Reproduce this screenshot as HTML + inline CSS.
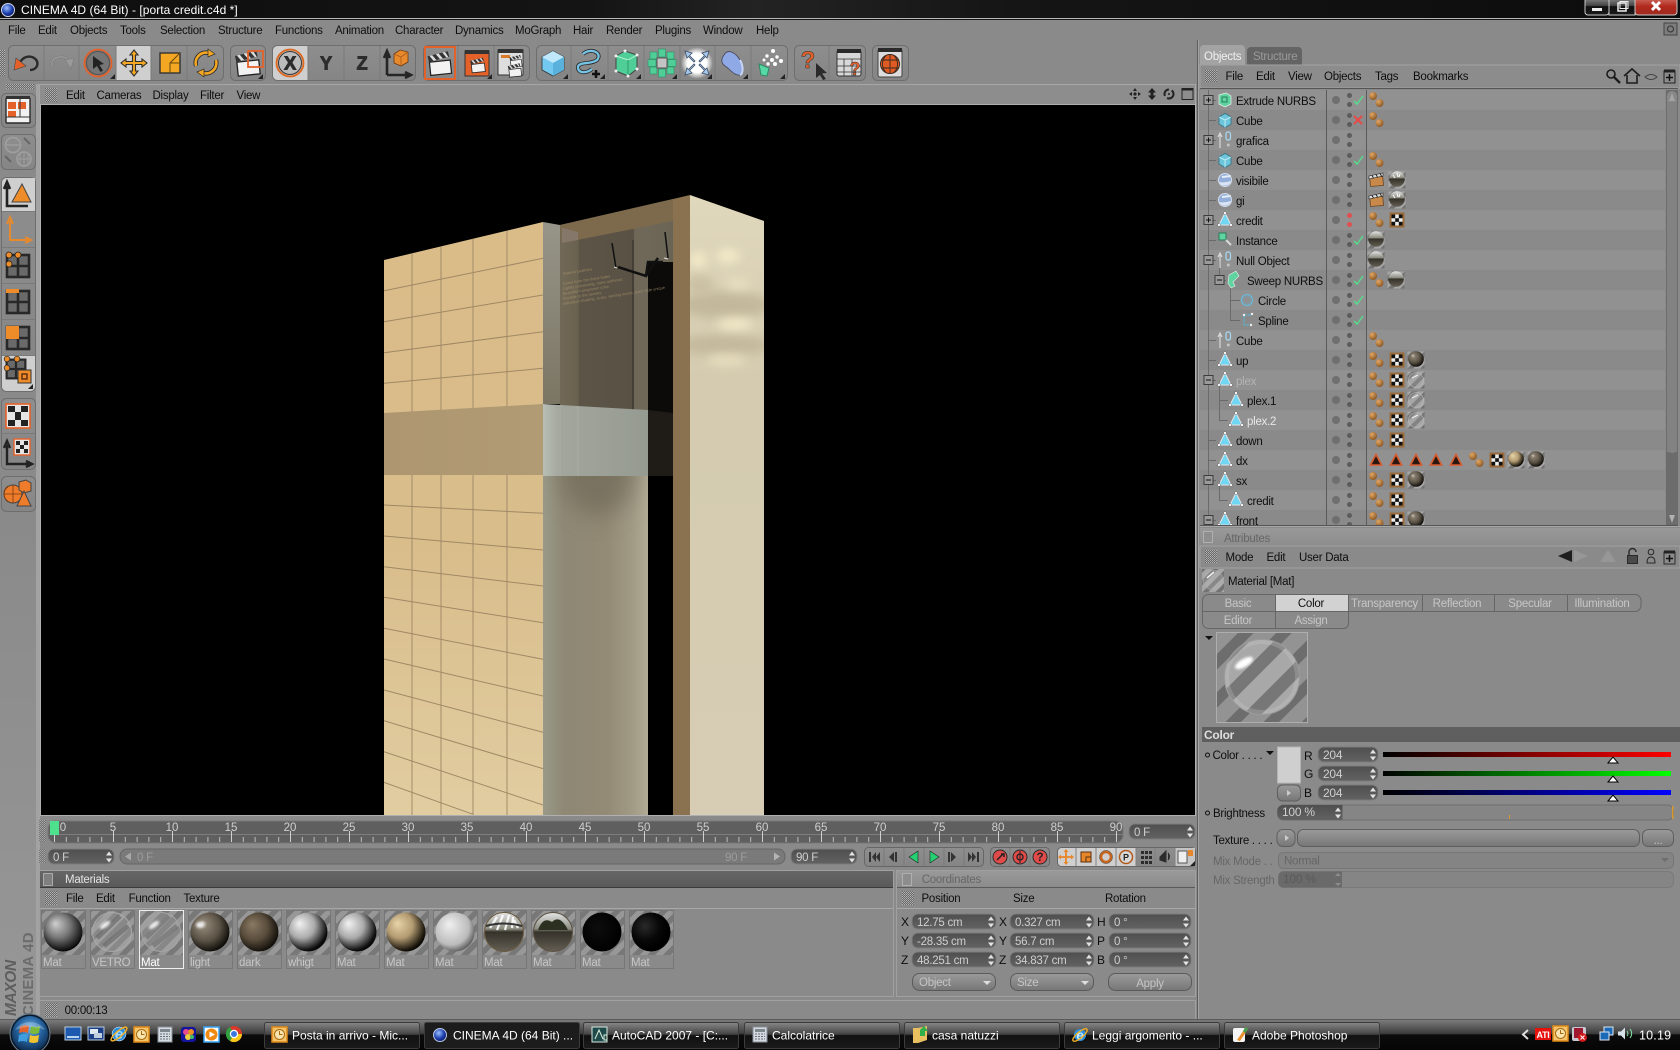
<!DOCTYPE html>
<html><head><meta charset="utf-8"><title>CINEMA 4D</title>
<style>
html,body{margin:0;padding:0;background:#8a8a8a;width:1680px;height:1050px;overflow:hidden}
svg{display:block}
text{font-family:"Liberation Sans",sans-serif;font-size:11.5px;letter-spacing:-.25px;fill:#0e0e0e}
.l{fill:#cfcfcf}.d{fill:#666}.g{fill:#c6c6c6}.w{fill:#fff;font-size:12px;letter-spacing:0}
.b{font-weight:bold}
</style></head><body>
<svg xmlns="http://www.w3.org/2000/svg" width="1680" height="1050" viewBox="0 0 1680 1050">
<defs>
<linearGradient id="tb" x1="0" y1="0" x2="0" y2="1"><stop offset="0" stop-color="#7b7b7b"/><stop offset=".45" stop-color="#3d3d3d"/><stop offset=".5" stop-color="#0b0b0b"/><stop offset="1" stop-color="#050505"/></linearGradient>
<linearGradient id="tbtn" x1="0" y1="0" x2="0" y2="1"><stop offset="0" stop-color="#888"/><stop offset=".45" stop-color="#444"/><stop offset=".5" stop-color="#111"/><stop offset="1" stop-color="#1a1a1a"/></linearGradient>
<linearGradient id="title" x1="0" y1="0" x2="1" y2="0"><stop offset="0" stop-color="#0e0e0e"/><stop offset=".35" stop-color="#141414"/><stop offset=".45" stop-color="#232323"/><stop offset=".6" stop-color="#151515"/><stop offset="1" stop-color="#0c0c0c"/></linearGradient>
<linearGradient id="grp" x1="0" y1="0" x2="0" y2="1"><stop offset="0" stop-color="#8e8e8e"/><stop offset="1" stop-color="#858585"/></linearGradient>
<linearGradient id="dk" x1="0" y1="0" x2="0" y2="1"><stop offset="0" stop-color="#4f4f4f"/><stop offset="1" stop-color="#626262"/></linearGradient>
<linearGradient id="btn" x1="0" y1="0" x2="0" y2="1"><stop offset="0" stop-color="#9a9a9a"/><stop offset="1" stop-color="#777"/></linearGradient>
<linearGradient id="hd" x1="0" y1="0" x2="0" y2="1"><stop offset="0" stop-color="#666"/><stop offset="1" stop-color="#5a5a5a"/></linearGradient>
<linearGradient id="hl" x1="0" y1="0" x2="0" y2="1"><stop offset="0" stop-color="#999"/><stop offset="1" stop-color="#8c8c8c"/></linearGradient>
<linearGradient id="sr" x1="0" y1="0" x2="1" y2="0"><stop offset="0" stop-color="#000"/><stop offset="1" stop-color="#f00"/></linearGradient>
<linearGradient id="sg" x1="0" y1="0" x2="1" y2="0"><stop offset="0" stop-color="#000"/><stop offset="1" stop-color="#0f0"/></linearGradient>
<linearGradient id="sb" x1="0" y1="0" x2="1" y2="0"><stop offset="0" stop-color="#000"/><stop offset="1" stop-color="#00f"/></linearGradient>
<linearGradient id="tile" x1="0" y1="0" x2="0" y2="1"><stop offset="0" stop-color="#d9bc88"/><stop offset=".55" stop-color="#d9bd8b"/><stop offset="1" stop-color="#e1cda1"/></linearGradient>
<linearGradient id="glassL" x1="0" y1="0" x2="1" y2="0"><stop offset="0" stop-color="#9a9988"/><stop offset=".2" stop-color="#8e8875"/><stop offset=".6" stop-color="#938a75"/><stop offset=".85" stop-color="#a19a85"/><stop offset="1" stop-color="#b1ab96"/></linearGradient>
<linearGradient id="right" x1="0" y1="0" x2="0" y2="1"><stop offset="0" stop-color="#e0d8bd"/><stop offset=".3" stop-color="#d4cbb0"/><stop offset="1" stop-color="#d6cdb4"/></linearGradient>
<linearGradient id="band" x1="0" y1="0" x2="1" y2="0"><stop offset="0" stop-color="#ad9670"/><stop offset="1" stop-color="#b19b74"/></linearGradient>
<linearGradient id="bandg" x1="0" y1="0" x2="1" y2="0"><stop offset="0" stop-color="#b9bfb5"/><stop offset=".16" stop-color="#a2a69c"/><stop offset="1" stop-color="#969b92"/></linearGradient>
<linearGradient id="upl" x1="0" y1="0" x2="0" y2="1"><stop offset="0" stop-color="#979589"/><stop offset="1" stop-color="#7b7563"/></linearGradient>
<linearGradient id="upg" x1="0" y1="0" x2="1" y2="0"><stop offset="0" stop-color="#716956"/><stop offset=".16" stop-color="#6a624f"/><stop offset=".17" stop-color="#5c5446"/><stop offset=".65" stop-color="#595144"/><stop offset=".66" stop-color="#6f6859"/><stop offset=".78" stop-color="#6f6859"/><stop offset="1" stop-color="#6a6455"/></linearGradient>
<linearGradient id="env" x1="0" y1="0" x2="0" y2="1"><stop offset="0" stop-color="#e4e6e6"/><stop offset=".42" stop-color="#8c8c80"/><stop offset=".5" stop-color="#35322a"/><stop offset="1" stop-color="#655f54"/></linearGradient>
<linearGradient id="leftfade" x1="0" y1="0" x2="0" y2="1"><stop offset="0" stop-color="#8a8a8a"/><stop offset="1" stop-color="#979797"/></linearGradient>
<radialGradient id="sGray" cx=".45" cy=".4" r=".62" fx=".3" fy=".28"><stop offset="0" stop-color="#cfcfcf"/><stop offset=".5" stop-color="#777"/><stop offset="1" stop-color="#000"/></radialGradient>
<radialGradient id="sLight" cx=".42" cy=".4" r=".62" fx=".3" fy=".28"><stop offset="0" stop-color="#d8d0c4"/><stop offset=".18" stop-color="#8a8071"/><stop offset=".6" stop-color="#5b5346"/><stop offset="1" stop-color="#0c0a06"/></radialGradient>
<radialGradient id="sDark" cx=".42" cy=".42" r=".62" fx=".32" fy=".3"><stop offset="0" stop-color="#8a7a64"/><stop offset=".55" stop-color="#5a4d3c"/><stop offset="1" stop-color="#0c0a06"/></radialGradient>
<radialGradient id="sWhite" cx=".4" cy=".38" r=".66" fx=".28" fy=".28"><stop offset="0" stop-color="#f2f2f2"/><stop offset=".5" stop-color="#aaa"/><stop offset=".9" stop-color="#111"/><stop offset="1" stop-color="#000"/></radialGradient>
<radialGradient id="sTan" cx=".4" cy=".38" r=".66" fx=".28" fy=".28"><stop offset="0" stop-color="#e8d3a8"/><stop offset=".5" stop-color="#b39b72"/><stop offset=".9" stop-color="#1c170d"/><stop offset="1" stop-color="#000"/></radialGradient>
<radialGradient id="sPale" cx=".42" cy=".4" r=".66" fx=".35" fy=".3"><stop offset="0" stop-color="#f0f0f0"/><stop offset=".7" stop-color="#bbb"/><stop offset="1" stop-color="#4a4a4a"/></radialGradient>
<radialGradient id="sBlack" cx=".4" cy=".4" r=".6"><stop offset="0" stop-color="#0d0d0d"/><stop offset="1" stop-color="#000"/></radialGradient>
<radialGradient id="sBlack2" cx=".35" cy=".35" r=".6"><stop offset="0" stop-color="#2a2a2a"/><stop offset=".6" stop-color="#080808"/><stop offset="1" stop-color="#000"/></radialGradient>
<radialGradient id="ballG" cx=".35" cy=".3" r=".7"><stop offset="0" stop-color="#e0a868"/><stop offset="1" stop-color="#8e5a26"/></radialGradient>
<radialGradient id="orb" cx=".5" cy=".35" r=".7"><stop offset="0" stop-color="#6fb2e8"/><stop offset=".5" stop-color="#24609c"/><stop offset="1" stop-color="#0a2240"/></radialGradient>
<radialGradient id="c4d" cx=".4" cy=".35" r=".7"><stop offset="0" stop-color="#9cc0ff"/><stop offset=".6" stop-color="#1c3fae"/><stop offset="1" stop-color="#071656"/></radialGradient>
<radialGradient id="glow" cx=".5" cy=".5" r=".5"><stop offset="0" stop-color="#fff"/><stop offset=".6" stop-color="#fff"/><stop offset="1" stop-color="#fff" stop-opacity="0"/></radialGradient>
<pattern id="grip" width="2" height="2" patternUnits="userSpaceOnUse"><rect width="2" height="2" fill="#686868"/><rect width="1" height="1" fill="#b4b4b4"/><rect x="1" y="1" width="1" height="1" fill="#a0a0a0"/></pattern>
<pattern id="st" width="11" height="11" patternUnits="userSpaceOnUse" patternTransform="rotate(45)"><rect width="11" height="11" fill="#989898"/><rect width="5.5" height="11" fill="#787878"/></pattern>
<pattern id="stP" width="27" height="27" patternUnits="userSpaceOnUse" patternTransform="rotate(45)"><rect width="27" height="27" fill="#939393"/><rect width="11" height="27" fill="#6d6d6d"/></pattern>
<pattern id="stG" width="30" height="30" patternUnits="userSpaceOnUse" patternTransform="rotate(45 10 10)"><rect width="30" height="30" fill="#a8a8a8"/><rect width="13" height="30" fill="#777"/></pattern>
<pattern id="stM" width="9" height="9" patternUnits="userSpaceOnUse" patternTransform="rotate(45)"><rect width="9" height="9" fill="#a6a6a6"/><rect width="4" height="9" fill="#737373"/></pattern>
<pattern id="mn" x="54" y="0" width="11.8" height="50" patternUnits="userSpaceOnUse"><rect width="1" height="50" fill="#bdbdbd"/></pattern>
<pattern id="mj" x="54" y="0" width="59" height="50" patternUnits="userSpaceOnUse"><rect width="1" height="50" fill="#d0d0d0"/></pattern>
<filter id="bl" x="-100%" y="-100%" width="300%" height="300%"><feGaussianBlur stdDeviation="5"/></filter>
<filter id="bl3" x="-100%" y="-100%" width="300%" height="300%"><feGaussianBlur stdDeviation="12"/></filter>
<filter id="bl2" x="-100%" y="-100%" width="300%" height="300%"><feGaussianBlur stdDeviation="1.2"/></filter>
<clipPath id="vp"><rect x="41" y="105" width="1153" height="710"/></clipPath>
<clipPath id="rf"><path d="M690 195L764 221V815H690Z"/></clipPath>
<clipPath id="lf"><path d="M384 260L543 222V815H384Z"/></clipPath>
<clipPath id="gl"><rect x="543" y="476" width="105" height="339"/></clipPath>
<clipPath id="objs"><rect x="1200" y="90" width="465" height="435"/></clipPath>
<clipPath id="pc"><circle cx="1262" cy="677" r="37"/></clipPath>

<g id="spin"><path d="M0 4.5L3 .5L6 4.5ZM0 7.5L3 11.5L6 7.5Z" fill="#e4e4e4"/></g>
<path id="tick" d="M0 6L5 0L10 6Z" fill="#fff" stroke="#000" stroke-width="1"/>

<g id="dots"><circle cx="1336" cy="0" r="4" fill="#6f6f6f"/><circle cx="1349.500" cy="-4.500" r="2.500" fill="#5c5c5c"/><circle cx="1349.500" cy="4.500" r="2.500" fill="#5c5c5c"/></g>
<g id="dotsR"><circle cx="1336" cy="0" r="4" fill="#6f6f6f"/><circle cx="1349.500" cy="-4.500" r="2.500" fill="#e05050"/><circle cx="1349.500" cy="4.500" r="2.500" fill="#e05050"/></g>
<path id="ok" d="M1354 1L1357 4L1363 -4" fill="none" stroke="#54e08c" stroke-width="1.400"/>
<path id="no" d="M1354 -4L1362 4M1362 -4L1354 4" fill="none" stroke="#e84848" stroke-width="2"/>
<g id="plus"><rect x="-4.500" y="-4.500" width="9" height="9" fill="#9a9a9a" stroke="#3c3c3c"/><path d="M-2.500 0H2.500M0 -2.500V2.500" stroke="#111"/></g>
<g id="minus"><rect x="-4.500" y="-4.500" width="9" height="9" fill="#9a9a9a" stroke="#3c3c3c"/><path d="M-2.500 0H2.500" stroke="#111"/></g>
<g id="poly"><path d="M0 -7L6 5H-6Z" fill="#6fd6f4" stroke="#e4e4e4"/><circle cy="-7" r="1.400" fill="#fff" stroke="#555" stroke-width=".4"/><circle cx="-6" cy="5" r="1.400" fill="#fff" stroke="#555" stroke-width=".4"/><circle cx="6" cy="5" r="1.400" fill="#fff" stroke="#555" stroke-width=".4"/></g>
<g id="nul"><path d="M-6 8V-5M-8 -3L-6 -7L-4 -3" fill="none" stroke="#d8d8d8" stroke-width="1.200"/><rect x="0" y="-8" width="4.500" height="8" rx="2" fill="none" stroke="#a8d8f0" stroke-width="1.200"/><circle cx="2.300" cy="5" r="1.500" fill="#c4c4c4"/></g>
<g id="cub"><path d="M-6 -3L0 -6.500L6 -3V4L0 7.500L-6 4Z" fill="#6ec6dc" stroke="#3c7a8c"/><path d="M-6 -3L0 0L6 -3M0 0V7.500" fill="none" stroke="#d0f2fa" stroke-width=".8"/></g>
<g id="sph"><circle r="6.500" fill="#93aed8"/><path d="M-6 2A6.500 6.500 0 0 0 6 1Q0 3 -6 2Z" fill="#dbe4f2"/><path d="M-3 -3L6 -4" stroke="#e6eefa" stroke-width="2"/><circle r="6.500" fill="none" stroke="#d4dcea"/></g>
<g id="balls"><circle cx="1373" cy="-4" r="4" fill="url(#ballG)"/><circle cx="1379.500" cy="3" r="4" fill="url(#ballG)"/></g>
<g id="chk"><rect x="1389.500" y="-7.500" width="15" height="15" fill="#9a6c3c"/><rect x="1391.500" y="-5.500" width="11" height="11" fill="#eee"/><path d="M1391.500 -5.500h3.700v3.700h-3.700zM1398.800 -5.500h3.700v3.700h-3.700zM1395.200 -1.800h3.700v3.700h-3.700zM1391.500 1.800h3.700v3.700h-3.700zM1398.800 1.800h3.700v3.700h-3.700z" fill="#111"/></g>
<g id="clap"><rect x="1370" y="-3" width="13" height="9" fill="#c8894a" stroke="#6a4520" stroke-width=".8" transform="rotate(-5 1376 0)"/><path d="M1369 -4L1383 -7V-4L1369 -1Z" fill="#ddd" stroke="#222" stroke-width=".6"/><path d="M1372 -4.500l1.500 2.500M1376 -5.500l1.500 2.500M1380 -6.500l1.500 2.500" stroke="#222"/></g>
<g id="tagS"><rect x="-8.500" y="-8.500" width="17" height="17" fill="url(#stM)"/></g>
<g id="tagChrome"><use href="#tagS"/><circle r="7.800" cy="-1" fill="url(#env)"/></g>
<g id="tagGi"><use href="#tagS"/><circle r="7.800" cy="-1" fill="url(#env)"/><path d="M-4 -5l2 3M0 -7l1 4M3 -6l-1 3" stroke="#fff" stroke-width="1"/></g>
<g id="tagLight"><use href="#tagS"/><circle r="7.800" cy="-1" fill="url(#sLight)"/></g>
<g id="tagGlass"><rect x="-8.500" y="-8.500" width="17" height="17" fill="url(#stM)"/><circle r="7.500" fill="#a8a8a8" fill-opacity=".3" stroke="#bcbcbc" stroke-width=".6"/><path d="M-4 -2L2 -5" stroke="#eee"/></g>
<g id="tagTan"><use href="#tagS"/><circle r="7.800" cy="-1" fill="url(#sTan)"/></g>
<g id="tri"><path d="M0 -5.500L5.500 5H-5.500Z" fill="#2a1810" stroke="#d8582c" stroke-width="1.600"/></g>

<g id="clapper"><g transform="rotate(-6)"><rect x="-11" y="-2" width="22" height="14" fill="#f2f2f2" stroke="#222" stroke-width="1.300"/></g><g transform="rotate(-14)"><rect x="-11" y="-10" width="22" height="6" fill="#333"/><path d="M-9 -10l3 6h3l-3 -6zM-2 -10l3 6h3l-3 -6zM5 -10l3 6h2l-2 -6z" fill="#ddd"/></g></g>
<path id="corner" d="M0 5L5 0V5Z" fill="#222"/>
<path id="moveA" d="M0 -13L4 -8H1.500V-1.500H8V-4L13 0L8 4V1.500H1.500V8H4L0 13L-4 8H-1.500V1.500H-8V4L-13 0L-8 -4V-1.500H-1.500V-8H-4Z" fill="#f3a722" stroke="#2e2e2e" stroke-width="1.100"/>
<g id="grid"><rect x="-11" y="-11" width="22" height="22" fill="#6a6a6a" stroke="#282828" stroke-width="2.600"/><path d="M0 -11V11M-11 0H11" stroke="#282828" stroke-width="2.600"/></g>
</defs>

<rect width="1680" height="1050" fill="#8a8a8a"/>
<rect x="0" y="520" width="36" height="500" fill="url(#leftfade)"/>

<!-- TITLE BAR -->
<rect width="1680" height="18" fill="url(#title)"/>
<rect y="18" width="1680" height="1" fill="#b8b8b8"/><rect y="19" width="1680" height="1" fill="#141414"/>
<circle cx="8" cy="10" r="6.500" fill="url(#c4d)" stroke="#cfd6e6"/>
<text x="21" y="14" class="w" style="font-size:12px;letter-spacing:.05px">CINEMA 4D (64 Bit) - [porta credit.c4d *]</text>
<g>
<rect x="1585" y="-2" width="24" height="17" rx="3" fill="url(#tbtn)" stroke="#c8c8c8"/>
<rect x="1609" y="-2" width="26" height="17" fill="url(#tbtn)" stroke="#c8c8c8"/>
<linearGradient id="cl" x1="0" y1="0" x2="0" y2="1"><stop offset="0" stop-color="#cf6a5e"/><stop offset=".5" stop-color="#b0291c"/><stop offset="1" stop-color="#a02a20"/></linearGradient>
<rect x="1635" y="-2" width="42" height="17" rx="3" fill="url(#cl)" stroke="#c8c8c8"/>
<rect x="1592" y="8" width="10" height="3" fill="#eee"/>
<rect x="1618" y="3" width="8" height="8" fill="none" stroke="#eee" stroke-width="1.500"/><rect x="1620" y="1.500" width="8" height="7" fill="none" stroke="#eee"/>
<path d="M1652 2L1660 10M1660 2L1652 10" stroke="#fff" stroke-width="3"/>
</g>

<!-- MENU -->
<g>
<text x="8" y="34">File</text><text x="38" y="34">Edit</text><text x="70" y="34">Objects</text><text x="120" y="34">Tools</text><text x="160" y="34">Selection</text><text x="218" y="34">Structure</text><text x="275" y="34">Functions</text><text x="335" y="34">Animation</text><text x="395" y="34">Character</text><text x="455" y="34">Dynamics</text><text x="515" y="34">MoGraph</text><text x="573" y="34">Hair</text><text x="606" y="34">Render</text><text x="655" y="34">Plugins</text><text x="703" y="34">Window</text><text x="756" y="34">Help</text>
</g>
<g transform="translate(1664,23)"><rect width="13" height="12" fill="#7c7c7c" stroke="#444"/><circle cx="6.500" cy="6" r="3" fill="none" stroke="#333"/></g>

<!-- TOOLBAR -->
<rect x="0" y="50" width="5" height="26" fill="url(#grip)"/>
<g fill="url(#grp)" stroke="#6e6e6e">
<rect x="8.500" y="45.500" width="215" height="35" rx="5"/>
<rect x="230.500" y="45.500" width="35" height="35" rx="5"/>
<rect x="272.500" y="45.500" width="143" height="35" rx="5"/>
<rect x="423.500" y="45.500" width="106" height="35" rx="5"/>
<rect x="536.500" y="45.500" width="251" height="35" rx="5"/>
<rect x="794.500" y="45.500" width="71" height="35" rx="5"/>
<rect x="872.500" y="45.500" width="36" height="35" rx="5"/>
</g>
<rect x="116" y="46" width="35" height="34" fill="#cfcfcf"/>
<path d="M273 50a5 5 0 0 1 4 -4h31v34h-31a5 5 0 0 1 -4 -4z" fill="#cfcfcf"/>
<path d="M44 46V80M79 46V80M116 46V80M151 46V80M187 46V80M308 46V80M344 46V80M380 46V80M458 46V80M494 46V80M571 46V80M608 46V80M644 46V80M680 46V80M715 46V80M751 46V80M829 46V80" stroke="#7a7a7a"/>
<!-- undo -->
<g transform="translate(27,63)"><path d="M-7 -1Q-2 -8 5 -6Q12 -3 10 3Q8 7 3 7" fill="none" stroke="#2a2a2a" stroke-width="2.400"/><path d="M-13 7L-11 -5L-1 3Z" fill="#e5612a" stroke="#444" stroke-width=".6"/></g>
<!-- redo -->
<g transform="translate(61,63)"><path d="M-9 3Q-10 -5 -2 -6Q6 -7 8 -1" fill="none" stroke="#7c7c7c" stroke-width="2.600"/><path d="M-9 3Q-10 -5 -2 -6Q6 -7 8 -1" fill="none" stroke="#9d9d9d" stroke-width="1.200"/><path d="M13 -5L4 -3L10 6Z" fill="#9a9a9a" stroke="#7a7a7a" stroke-width=".6"/></g>
<!-- select -->
<g transform="translate(98,63)"><circle r="13.500" fill="#767676" stroke="#e5612a" stroke-width="1.800"/><circle r="11.500" fill="none" stroke="#555"/><path d="M-5 -7L6 1L1.500 2L5 7.500L2.500 9L-1 3L-5 6Z" fill="#222"/></g>
<use href="#corner" x="110" y="74"/>
<!-- move -->
<use href="#moveA" x="134" y="63"/>
<!-- scale -->
<g transform="translate(170,63)"><rect x="-10" y="-10" width="20" height="20" fill="#f3a722" stroke="#333" stroke-width="1.400"/><path d="M0 10V0H10M0 0L10 -10" fill="none" stroke="#6a4a10" stroke-width="1"/></g>
<!-- rotate -->
<g transform="translate(206,63)" fill="none"><path d="M-10 3A10.500 10.500 0 0 1 3 -10" stroke="#2e2e2e" stroke-width="4.400"/><path d="M10 -3A10.500 10.500 0 0 1 -3 10" stroke="#2e2e2e" stroke-width="4.400"/><path d="M-10 3A10.500 10.500 0 0 1 3 -10" stroke="#f3a722" stroke-width="2.600"/><path d="M10 -3A10.500 10.500 0 0 1 -3 10" stroke="#f3a722" stroke-width="2.600"/><path d="M2 -14L9 -9L2 -6Z" fill="#f3a722" stroke="#2e2e2e" stroke-width=".7"/><path d="M-2 14L-9 9L-2 6Z" fill="#f3a722" stroke="#2e2e2e" stroke-width=".7"/></g>
<!-- render region -->
<g transform="translate(248,63)"><use href="#clapper"/><rect x="0" y="-12" width="15" height="16" fill="none" stroke="#e5612a" stroke-width="1.800"/></g>
<use href="#corner" x="258" y="74"/>
<!-- X Y Z -->
<g transform="translate(290,63)"><circle r="13.500" fill="#bcbcbc" stroke="#e0661c" stroke-width="1.800"/><circle r="11.500" fill="none" stroke="#333"/></g>
<text x="290" y="69.500" text-anchor="middle" class="b" style="font-size:18px;fill:#2c2c2c;stroke:#2c2c2c;stroke-width:1">X</text>
<text x="326" y="69.500" text-anchor="middle" class="b" style="font-size:18px;fill:#2c2c2c;stroke:#2c2c2c;stroke-width:.9">Y</text>
<text x="362" y="69.500" text-anchor="middle" class="b" style="font-size:18px;fill:#2c2c2c;stroke:#2c2c2c;stroke-width:.9">Z</text>
<g transform="translate(398,63)"><path d="M-11 12V-9M-14 -5L-11 -12L-8 -5M-11 12H11M7 9L13 12L7 15" fill="none" stroke="#252525" stroke-width="2.600"/><path d="M-4 -9L2 -13L10 -11L10 -1L3 3L-4 0Z" fill="#e88a2c" stroke="#6c3a12" stroke-width=".8"/><path d="M-4 -9L3 -6L10 -11M3 -6V3" fill="none" stroke="#a85a1c" stroke-width=".8"/></g>
<!-- render -->
<g transform="translate(440,63)"><use href="#clapper" transform="scale(.95)"/><rect x="-15" y="-16" width="30" height="32" fill="none" stroke="#e5612a" stroke-width="2"/></g>
<g transform="translate(477,63)"><rect x="-12" y="-12" width="24" height="25" fill="#e5612a" stroke="#333"/><rect x="-12" y="-13" width="24" height="4" fill="#333"/><use href="#clapper" transform="translate(1,2) scale(.6)"/></g>
<use href="#corner" x="487" y="74"/>
<g transform="translate(511,63)"><rect x="-13" y="-13" width="25" height="25" fill="#ddd" stroke="#333"/><rect x="-13" y="-14" width="25" height="4" fill="#333"/><rect x="-10" y="-8" width="9" height="3" fill="#d87a2a"/><use href="#clapper" transform="translate(5,-2) scale(.5)"/><use href="#clapper" transform="translate(4,7) scale(.55)"/></g>
<!-- cube -->
<g transform="translate(553,63)"><path d="M-11 -6L0 -12L11 -6V7L0 13L-11 7Z" fill="#72c8ee" stroke="#333" stroke-width=".8"/><path d="M-11 -6L0 0L11 -6L0 -12Z" fill="#bfe8fa"/><path d="M0 0V13L11 7V-6Z" fill="#5ab2dc"/></g><use href="#corner" x="563" y="74"/>
<!-- spline -->
<g transform="translate(589,61)" fill="none"><path d="M-6 -7C2 -14 14 -8 8 -1C2 4 -12 0 -11 7C-10 13 -2 12 3 8" stroke="#2c2c2c" stroke-width="4"/><path d="M-6 -7C2 -14 14 -8 8 -1C2 4 -12 0 -11 7C-10 13 -2 12 3 8" stroke="#76c4e6" stroke-width="2.300"/><path d="M7 9V17M3 13H11" stroke="#111" stroke-width="2.500"/></g><use href="#corner" x="600" y="74"/>
<!-- nurbs -->
<g transform="translate(626,63)"><path d="M-10 -7L-1 -12L11 -8V6L2 13L-10 8Z" fill="#4fce98" stroke="#444"/><path d="M-10 -7L2 -3L11 -8" fill="none" stroke="#b4f4d4"/><path d="M2 -3V13" stroke="#2f9a6c"/><g fill="#eee"><circle cx="-10" cy="-7" r="1.500"/><circle cx="-1" cy="-12" r="1.500"/><circle cx="11" cy="-8" r="1.500"/><circle cx="11" cy="6" r="1.500"/><circle cx="2" cy="13" r="1.500"/><circle cx="-10" cy="8" r="1.500"/></g></g><use href="#corner" x="636" y="74"/>
<!-- array -->
<g transform="translate(662,63)"><g fill="#4fce98" stroke="#2f8a64" stroke-width=".6"><rect x="-3.500" y="-14" width="7" height="8"/><rect x="-3.500" y="6" width="7" height="8"/><rect x="-14" y="-3.500" width="8" height="7"/><rect x="6" y="-3.500" width="8" height="7"/><rect x="5" y="-11" width="7" height="7"/><rect x="-12" y="-11" width="7" height="7"/><rect x="5" y="4" width="7" height="7"/><rect x="-12" y="4" width="7" height="7"/></g><rect x="-5" y="-5" width="10" height="10" fill="#c4c4c4" stroke="#555"/></g><use href="#corner" x="672" y="74"/>
<!-- deformer -->
<g transform="translate(697,63)"><circle r="16" fill="url(#glow)"/><g stroke="#3d4e66" stroke-width=".8" fill="#a6c8ec"><path d="M-12 -12L-5 -10L-7.500 -7.500L-2 -2L-3 -1L-8.500 -6.500L-10 -5Z"/><path d="M12 -12L5 -10L7.500 -7.500L2 -2L3 -1L8.500 -6.500L10 -5Z"/><path d="M-12 12L-5 10L-7.500 7.500L-2 2L-3 1L-8.500 6.500L-10 5Z"/><path d="M12 12L5 10L7.500 7.500L2 2L3 1L8.500 6.500L10 5Z"/></g></g><use href="#corner" x="707" y="74"/>
<!-- shape -->
<g transform="translate(733,63)"><path d="M-9 -8C-5 -15 3 -10 7 -3C11 4 11 11 7 12C1 13 -3 6 -8 3C-12 0 -12 -4 -9 -8Z" fill="#8fa8e6" stroke="#445" stroke-width=".8"/><path d="M7 12C10 11 11 4 7 -3" fill="none" stroke="#c7d4f4" stroke-width="2"/></g><use href="#corner" x="743" y="74"/>
<!-- particles -->
<g transform="translate(770,63)"><path d="M-11 1L-1 5L-3 13L-9 12Z" fill="#58d8a4" stroke="#2d8a64"/><g fill="#fff"><circle cx="3" cy="-12" r="2"/><circle cx="-3" cy="-7" r="1.700"/><circle cx="7" cy="-6" r="1.700"/><circle cx="11" cy="-2" r="2"/><circle cx="2" cy="-3" r="2"/><circle cx="-2" cy="1" r="1.700"/><circle cx="5" cy="1" r="2"/><circle cx="-6" cy="-3" r="1.500"/></g></g><use href="#corner" x="780" y="74"/>
<!-- help -->
<g transform="translate(813,62)"><text x="-5" y="6" text-anchor="middle" class="b" style="font-size:24px;fill:#e5612a;stroke:#2a2a2a;stroke-width:.5;letter-spacing:0">?</text><path d="M4 1L15 11L10 11.500L14 17L11 18L8 13L4 16Z" fill="#2a2a2a" transform="translate(-1,0)"/></g>
<g transform="translate(849,63)"><rect x="-12" y="-13" width="24" height="26" rx="2" fill="#d8d8d8" stroke="#333"/><rect x="-12" y="-14" width="24" height="4" fill="#2a2a2a"/><path d="M-12 -4H12M-12 3H12M-12 9H12M-5 -4V13M3 -4V13" stroke="#333" stroke-width=".8"/><text x="6" y="12" text-anchor="middle" class="b" style="font-size:18px;fill:#e5612a;stroke:#222;stroke-width:.4;letter-spacing:0">?</text></g>
<g transform="translate(890,63)"><rect x="-12" y="-14" width="24" height="28" rx="2" fill="#ddd" stroke="#444"/><rect x="-12" y="-15" width="24" height="4" fill="#2a2a2a"/><circle cy="1" r="9.500" fill="#de5b24" stroke="#3a2a20"/><path d="M-9 -3H9M-9 5H9M0 -8.500V10.500M-4 -7.500A12 12 0 0 0 -4 9.500M4 -7.500A12 12 0 0 1 4 9.500" fill="none" stroke="#3a2a20" stroke-width=".9"/></g>

<!-- LEFT PALETTE -->
<rect x="36" y="84" width="4" height="936" fill="#a2a2a2"/>
<rect x="6" y="84" width="28" height="5" fill="url(#grip)"/>
<g fill="url(#grp)" stroke="#6e6e6e">
<rect x="1.500" y="93.500" width="34" height="34" rx="5"/>
<rect x="1.500" y="134.500" width="34" height="35" rx="5"/>
<rect x="1.500" y="177.500" width="34" height="214" rx="5"/>
<rect x="1.500" y="398.500" width="34" height="71" rx="5"/>
<rect x="1.500" y="476.500" width="34" height="35" rx="5"/>
</g>
<path d="M2 182a5 5 0 0 1 4 -4h29v33h-33z" fill="#cfcfcf"/>
<path d="M2 356h33v31a5 5 0 0 1 -4 4h-25a5 5 0 0 1 -4 -4z" fill="#cfcfcf"/>
<path d="M2 211.500H35M2 247.500H35M2 283.500H35M2 319.500H35M2 355.500H35M2 433.500H35" stroke="#7a7a7a"/>
<!-- model -->
<g transform="translate(18,110)"><rect x="-12" y="-12" width="24" height="25" rx="1" fill="#f2f2f2" stroke="#2a2a2a" stroke-width="1.400"/><rect x="-12" y="-14" width="24" height="3" fill="#333"/><path d="M-10 -8h8v7h-8zM0 -8h8v7h-8z" fill="#e5612a"/><rect x="-10" y="1" width="8" height="6" fill="#e5612a"/><path d="M-12 7H12M2 -11V7" stroke="#333"/></g>
<!-- workplane disabled -->
<g transform="translate(18,152)" fill="none" stroke="#a0a0a0"><circle cx="-5" cy="-7" r="7.500" stroke-width="1.600"/><path d="M-12 -7H2" stroke-width="1.200"/><circle cx="6" cy="7" r="7" stroke-width="1.600"/><path d="M-1 7H13M6 0V14M2 1V13M10 1V13" stroke-width=".9"/><path d="M-13 4L-7 10M6 -14L12 -8" stroke="#666" stroke-width="2"/></g>
<!-- object -->
<g transform="translate(18,194)"><path d="M-11 -8V12H10M-14 -5L-11 -12L-8 -5" fill="none" stroke="#222" stroke-width="2.600"/><path d="M-6 8L4 -10L13 8Z" fill="#ee8c2a" stroke="#444"/></g>
<!-- axes -->
<g transform="translate(18,229)"><path d="M-8 -8V11H11M-11 -5L-8 -12L-5 -5M7 8L13 11L7 14" fill="none" stroke="#e88a2c" stroke-width="2"/></g>
<!-- points -->
<g transform="translate(18,266)"><use href="#grid"/><circle cx="-9" cy="-11" r="3" fill="#ee8c2a" stroke="#222" stroke-width=".8"/><circle cx="0" cy="-11" r="3" fill="#ee8c2a" stroke="#222" stroke-width=".8"/><circle cx="-9" cy="-2" r="3" fill="#ee8c2a" stroke="#222" stroke-width=".8"/></g>
<g transform="translate(18,302)"><use href="#grid"/><rect x="-12" y="-13" width="13" height="4" fill="#ee8c2a"/></g>
<g transform="translate(18,338)"><use href="#grid"/><rect x="-12" y="-12" width="13" height="13" fill="#ee8c2a"/></g>
<g transform="translate(18,371)"><use href="#grid" transform="translate(-2,-2) scale(.85)"/><circle cx="-11" cy="-12" r="2.800" fill="#ee8c2a" stroke="#222" stroke-width=".7"/><circle cx="-1" cy="-12" r="2.800" fill="#ee8c2a" stroke="#222" stroke-width=".7"/><circle cx="-11" cy="-3" r="2.800" fill="#ee8c2a" stroke="#222" stroke-width=".7"/><rect x="0" y="-1" width="13" height="13" fill="#ee8c2a" stroke="#333"/><rect x="4" y="3" width="5" height="5" fill="none" stroke="#5a2a10" stroke-width="1.400"/></g>
<use href="#corner" x="28" y="384"/>
<!-- texture -->
<g transform="translate(18,416)"><rect x="-12" y="-12" width="24" height="24" fill="#e5e5e5" stroke="#e5612a" stroke-width="1.600"/><path d="M-10 -10h7v6h-7zM3 -10h7v6h-7zM-3 -4h6v8h-6zM-10 4h7v6h-7zM3 4h7v6h-7z" fill="#222"/></g>
<g transform="translate(18,452)"><path d="M-11 -7V12H12M-14 -4L-11 -11L-8 -4M8 9L14 12L8 15" fill="none" stroke="#222" stroke-width="2.400"/><rect x="-4" y="-13" width="16" height="16" fill="#e5e5e5" stroke="#e5612a" stroke-width="1.400"/><path d="M-2 -11h4v4h-4zM6 -11h4v4h-4zM2 -7h4v4h-4zM-2 -3h4v4h-4zM6 -3h4v4h-4z" fill="#222"/></g>
<g transform="translate(18,494)"><circle cx="-5" cy="0" r="9" fill="#ee7c2a" stroke="#444"/><path d="M-14 0H4M-5 -9V9M-10 -8A10 10 0 0 0 -10 8" fill="none" stroke="#7a3a10" stroke-width=".8"/><path d="M1 -12L8 -14L13 -11V-3L6 -1L1 -4Z" fill="#ee7c2a" stroke="#444"/><path d="M-1 12L6 -3L13 12Z" fill="#ee7c2a" stroke="#444"/></g>
<!-- maxon logo -->
<text transform="translate(16,1016) rotate(-90)" class="b" style="font-size:15.500px;fill:#5e5e5e;letter-spacing:-.4px;font-style:italic">MAXON</text>
<text transform="translate(33,1016) rotate(-90)" class="b" style="font-size:15px;fill:#6c6c6c;letter-spacing:.2px">CINEMA 4D</text>

<!-- VIEWPORT HEADER -->
<rect x="39.500" y="84.500" width="1156" height="20" fill="#8d8d8d" stroke="#a6a6a6"/>
<rect x="45" y="88" width="12" height="14" fill="url(#grip)"/>
<text x="66" y="99">Edit</text><text x="96.500" y="99">Cameras</text><text x="152.500" y="99">Display</text><text x="200" y="99">Filter</text><text x="236.500" y="99">View</text>
<g transform="translate(1135,94)"><path d="M0 -6L2 -3H-2ZM0 6L2 3H-2ZM-6 0L-3 -2V2ZM6 0L3 -2V2Z" fill="#222"/><circle r="1.600" fill="#222"/></g>
<path d="M1152 88L1156 92.500H1153.500V95.500H1156L1152 100L1148 95.500H1150.500V92.500H1148Z" fill="#222"/>
<g transform="translate(1169,94)"><circle r="4.500" fill="none" stroke="#222" stroke-width="2" stroke-dasharray="9 3"/><circle r="1" fill="#222"/></g>
<rect x="1182" y="88.500" width="11" height="11" fill="none" stroke="#222"/><rect x="1182" y="88" width="11" height="2.500" fill="#222"/>

<!-- VIEWPORT -->
<rect x="40" y="104" width="1156" height="712" fill="#b0b0b0"/>
<rect x="41" y="105" width="1154" height="710" fill="#000"/>
<g clip-path="url(#vp)">
<path d="M384 260L543 222V815H384Z" fill="url(#tile)"/>
<g clip-path="url(#lf)">
<path d="M412 0V413M441 0V413M473 0V413M507 0V413M412 475V815M441 475V815M473 475V815M507 475V815" stroke="#a48c69" stroke-width="1"/>
<g fill="none" stroke="#a08865" stroke-width="1">
<path d="M384 290.700L543 258.300M384 321.700L543 295M384 352.700L543 331.700M384 383.300L543 368.300"/>
<path d="M384 505L543 513.300M384 536L543 550M384 566.700L543 586M384 597.300L543 622.700M384 628.300L543 659.300M384 659L543 696M384 690L543 732.300M384 720.700L543 768.700M384 751.700L543 805M384 782.300L473 814.300"/>
</g>
</g>
<path d="M384 413L543 404V475H384Z" fill="url(#band)"/>
<!-- upper glass -->
<path d="M543 222L560 225V404H543Z" fill="url(#upl)"/>
<path d="M560 225L673 199V420H560Z" fill="url(#upg)"/>
<rect x="648" y="262" width="25" height="214" fill="#0c0b0a"/>
<path d="M633 240V420" stroke="#2e2b26"/>
<!-- beam -->
<path d="M560 225L673 199V221L562 243Z" fill="#7d6a4c"/>
<path d="M562 228L578 232V240L562 243Z" fill="#85786a"/>
<!-- bracket -->
<g fill="none" stroke="#111"><path d="M612 243L616 268" stroke-width="1.500"/><path d="M665 232L668 258" stroke-width="1.500"/><path d="M618 267L646 276L658 258" stroke-width="2.500"/><path d="M646 276L648 262H663" stroke-width="2.500"/></g>
<g fill="none" stroke="#ddd" stroke-width="1"><path d="M614 267l3 1M664 258l4 1"/></g>
<!-- glass text -->
<g opacity=".7">
<text transform="translate(563,275) rotate(-9)" style="font-size:4px;letter-spacing:0;fill:#b09a6f">Natural Leathers</text>
<text transform="translate(563,285) rotate(-9)" style="font-size:4px;letter-spacing:0;fill:#b09a6f">Come from the finest hides</text>
<text transform="translate(563,290) rotate(-9)" style="font-size:4px;letter-spacing:0;fill:#b09a6f">Lightly processing, more authentic</text>
<text transform="translate(563,295) rotate(-9)" style="font-size:4px;letter-spacing:0;fill:#b09a6f">Beautiful transparent color</text>
<text transform="translate(563,300) rotate(-9)" style="font-size:4px;letter-spacing:0;fill:#b09a6f">Durable to the senses</text>
<text transform="translate(563,305) rotate(-9)" style="font-size:4px;letter-spacing:0;fill:#b09a6f">Individual shading, scars, veining marks, each hide unique</text>
</g>
<!-- glass band -->
<path d="M543 404L648 410V476H543Z" fill="url(#bandg)"/>
<path d="M648 410L673 413V476H648Z" fill="#1f1c18"/>
<path d="M560 405V476M578 406V476" stroke="#b8bdb3" stroke-opacity=".35"/>
<!-- lower glass -->
<rect x="543" y="476" width="105" height="339" fill="url(#glassL)"/>
<g clip-path="url(#gl)"><ellipse cx="598" cy="468" rx="38" ry="48" fill="#716a58" opacity=".75" filter="url(#bl3)"/></g>
<!-- brown strip -->
<path d="M673 199L690 195V815H673Z" fill="#8a7150"/>
<!-- right face -->
<path d="M690 195L764 221V815H690Z" fill="url(#right)"/>
<g clip-path="url(#rf)">
<ellipse cx="725" cy="305" rx="45" ry="14" fill="#bdb294" opacity=".8" filter="url(#bl)"/>
<ellipse cx="725" cy="345" rx="45" ry="11" fill="#bfb497" opacity=".8" filter="url(#bl)"/>
<ellipse cx="700" cy="285" rx="14" ry="10" fill="#c6bb9e" opacity=".8" filter="url(#bl)"/>
<ellipse cx="698" cy="260" rx="9" ry="8" fill="#f3eac8" filter="url(#bl)"/>
<ellipse cx="728" cy="256" rx="12" ry="7" fill="#f3eac8" filter="url(#bl)"/>
<ellipse cx="738" cy="284" rx="12" ry="5" fill="#eae1c0" filter="url(#bl)"/>
<ellipse cx="735" cy="324" rx="18" ry="6" fill="#f3eac8" filter="url(#bl)"/>
<ellipse cx="727" cy="360" rx="20" ry="5" fill="#eae1c0" filter="url(#bl)"/>
</g>
</g>

<!-- TIMELINE -->
<rect x="39" y="820" width="7" height="22" fill="url(#grip)" opacity=".7"/>
<rect x="39" y="849" width="7" height="14" fill="url(#grip)" opacity=".7"/>
<rect x="48" y="821" width="1075" height="22" rx="8" fill="#5f5f5f" stroke="#777"/>
<rect x="49" y="834" width="1074" height="1" fill="#7e7e7e"/>
<rect x="54" y="837" width="1063" height="5" fill="url(#mn)"/>
<rect x="54" y="831" width="1063" height="11" fill="url(#mj)"/>
<rect x="50" y="821" width="9" height="14" fill="#4fe08e"/>
<g text-anchor="middle">
<text x="63" y="831" class="l" style="letter-spacing:0">0</text><text x="113" y="831" class="l" style="letter-spacing:0">5</text><text x="172" y="831" class="l" style="letter-spacing:0">10</text><text x="231" y="831" class="l" style="letter-spacing:0">15</text><text x="290" y="831" class="l" style="letter-spacing:0">20</text><text x="349" y="831" class="l" style="letter-spacing:0">25</text><text x="408" y="831" class="l" style="letter-spacing:0">30</text><text x="467" y="831" class="l" style="letter-spacing:0">35</text><text x="526" y="831" class="l" style="letter-spacing:0">40</text><text x="585" y="831" class="l" style="letter-spacing:0">45</text><text x="644" y="831" class="l" style="letter-spacing:0">50</text><text x="703" y="831" class="l" style="letter-spacing:0">55</text><text x="762" y="831" class="l" style="letter-spacing:0">60</text><text x="821" y="831" class="l" style="letter-spacing:0">65</text><text x="880" y="831" class="l" style="letter-spacing:0">70</text><text x="939" y="831" class="l" style="letter-spacing:0">75</text><text x="998" y="831" class="l" style="letter-spacing:0">80</text><text x="1057" y="831" class="l" style="letter-spacing:0">85</text><text x="1116" y="831" class="l" style="letter-spacing:0">90</text>
</g>
<rect x="1129" y="824" width="66" height="15" rx="6" fill="url(#dk)" stroke="#7c7c7c"/><text x="1134" y="836" class="l">0 F</text><use href="#spin" x="1187" y="826"/>
<rect x="48" y="849" width="66" height="15" rx="6" fill="url(#dk)" stroke="#7c7c7c"/><text x="53" y="861" class="l">0 F</text><use href="#spin" x="106" y="851"/>
<rect x="120" y="849" width="665" height="15" rx="7" fill="#7a7a7a" stroke="#666"/>
<path d="M125 856.500L131 852.500V860.500Z" fill="#a8a8a8"/><text x="137" y="861" style="fill:#9c9c9c">0 F</text>
<text x="747" y="861" text-anchor="end" style="fill:#9c9c9c">90 F</text><path d="M780 856.500L774 852.500V860.500Z" fill="#b4b4b4"/>
<rect x="791" y="849" width="66" height="15" rx="6" fill="url(#dk)" stroke="#7c7c7c"/><text x="796" y="861" class="l">90 F</text><use href="#spin" x="849" y="851"/>
<!-- transport -->
<rect x="864.500" y="847.500" width="119" height="19" rx="4" fill="url(#grp)" stroke="#666"/>
<path d="M884 848V866M904 848V866M924 848V866M944 848V866M964 848V866" stroke="#7a7a7a"/>
<g fill="#333"><path d="M869 852h2v10h-2zM872 857l4 -5v10zM876 857l4 -5v10z"/><path d="M889 857l5 -5v10zM895 852h2v10h-2z"/><path d="M948 852h2v10h-2zM951 852l5 5l-5 5z"/><path d="M968 852l4 5l-4 5zM972 852l4 5l-4 5zM977 852h2v10h-2z"/></g>
<path d="M909 857l9 -6v12z" fill="#24d070" stroke="#222" stroke-width=".6"/><path d="M930 851l9 6l-9 6z" fill="#24d070" stroke="#222" stroke-width=".6"/>
<rect x="990.500" y="847.500" width="59" height="19" rx="4" fill="url(#grp)" stroke="#666"/><path d="M1010 848V866M1030 848V866" stroke="#7a7a7a"/>
<g stroke="#2a2a2a" fill="#e04a48"><circle cx="1000" cy="857" r="7"/><circle cx="1020" cy="857" r="7"/><circle cx="1040" cy="857" r="7"/></g>
<path d="M997 860L1003 854M1001 854h3v3" stroke="#222" stroke-width="1.500" fill="none"/><circle cx="1020" cy="857" r="3" fill="none" stroke="#222" stroke-width="1.300"/><path d="M1020 851V863" stroke="#222"/><text x="1040" y="861" text-anchor="middle" class="b" style="fill:#222;letter-spacing:0">?</text>
<rect x="1057.500" y="847.500" width="138" height="19" rx="4" fill="url(#grp)" stroke="#666"/>
<path d="M1058 851a4 4 0 0 1 4 -3h74v18h-74a4 4 0 0 1 -4 -3z" fill="#cfcfcf"/>
<rect x="1175" y="848" width="20" height="18" fill="#c4c4c4"/>
<path d="M1076 848V866M1096 848V866M1116 848V866M1136 848V866M1155 848V866M1175 848V866" stroke="#808080"/>
<g transform="translate(1066,857) scale(.62)"><path d="M0 -13L4 -8H1.500V-1.500H8V-4L13 0L8 4V1.500H1.500V8H4L0 13L-4 8H-1.500V1.500H-8V4L-13 0L-8 -4V-1.500H-1.500V-8H-4Z" fill="#e8862a"/></g>
<rect x="1081" y="852" width="10" height="10" fill="#e8862a" stroke="#5a3010"/><path d="M1086 862V857H1091" fill="none" stroke="#5a3010"/>
<circle cx="1106" cy="857" r="5" fill="none" stroke="#c8641c" stroke-width="2.500"/><circle cx="1106" cy="857" r="6.500" fill="none" stroke="#333" stroke-width=".5"/>
<circle cx="1126" cy="857" r="6.500" fill="#d8d8d8" stroke="#b05a1c" stroke-width="1.500"/><text x="1126" y="860.500" text-anchor="middle" class="b" style="font-size:9px;fill:#222;letter-spacing:0">P</text>
<g fill="#2c2c2c"><rect x="1141" y="851" width="3" height="3"/><rect x="1145" y="851" width="3" height="3"/><rect x="1149" y="851" width="3" height="3"/><rect x="1141" y="856" width="3" height="3"/><rect x="1145" y="856" width="3" height="3"/><rect x="1149" y="856" width="3" height="3"/><rect x="1141" y="861" width="3" height="3"/><rect x="1145" y="861" width="3" height="3"/><rect x="1149" y="861" width="3" height="3"/></g>
<path d="M1160 857L1166 851V862L1160 860ZM1168 853a5 5 0 0 1 0 7" fill="#2c2c2c" stroke="#2c2c2c"/>
<rect x="1178" y="851" width="9" height="12" fill="#eee" stroke="#555"/><rect x="1188" y="850" width="5" height="6" fill="#e5862a"/><use href="#corner" x="1190" y="861"/>

<!-- MATERIALS -->
<rect x="39.500" y="870.500" width="854" height="126" fill="#8a8a8a" stroke="#a0a0a0"/>
<rect x="40" y="871" width="853" height="16" fill="url(#hd)"/><rect x="40" y="887" width="853" height="1" fill="#3c3c3c"/>
<rect x="43.500" y="873.500" width="9" height="12" fill="#7f7f7f" stroke="#aaa"/>
<text x="65" y="883" style="fill:#e4e4e4">Materials</text>
<rect x="45" y="891" width="12" height="14" fill="url(#grip)"/>
<text x="66" y="902">File</text><text x="96" y="902">Edit</text><text x="128.600" y="902">Function</text><text x="183.500" y="902">Texture</text>
<rect x="40" y="908" width="853" height="1" fill="#a8a8a8"/>
<g stroke="#777" fill="url(#st)">
<rect x="41.500" y="910.500" width="44" height="58"/><rect x="90.500" y="910.500" width="44" height="58"/><rect x="188.500" y="910.500" width="44" height="58"/><rect x="237.500" y="910.500" width="44" height="58"/><rect x="286.500" y="910.500" width="44" height="58"/><rect x="335.500" y="910.500" width="44" height="58"/><rect x="384.500" y="910.500" width="44" height="58"/><rect x="433.500" y="910.500" width="44" height="58"/><rect x="482.500" y="910.500" width="44" height="58"/><rect x="531.500" y="910.500" width="44" height="58"/><rect x="580.500" y="910.500" width="44" height="58"/><rect x="629.500" y="910.500" width="44" height="58"/>
</g>
<rect x="139.500" y="910.500" width="44" height="58" fill="url(#st)" stroke="#eee"/>
<g fill="#8a8a8a">
<rect x="42" y="955" width="43" height="13"/><rect x="91" y="955" width="43" height="13"/><rect x="140" y="955" width="43" height="13"/><rect x="189" y="955" width="43" height="13"/><rect x="238" y="955" width="43" height="13"/><rect x="287" y="955" width="43" height="13"/><rect x="336" y="955" width="43" height="13"/><rect x="385" y="955" width="43" height="13"/><rect x="434" y="955" width="43" height="13"/><rect x="483" y="955" width="43" height="13"/><rect x="532" y="955" width="43" height="13"/><rect x="581" y="955" width="43" height="13"/><rect x="630" y="955" width="43" height="13"/>
</g>
<circle cx="63" cy="932" r="19.500" fill="url(#sGray)"/>
<g><circle cx="112" cy="932" r="19.500" fill="#b4b4b4" fill-opacity=".28" stroke="#aaa"/><path d="M97 938L120 916M104 946L128 926" stroke="#6c6c6c" stroke-width="5" opacity=".7"/><ellipse cx="105" cy="925" rx="6" ry="2.500" fill="#eee" transform="rotate(-35 105 925)" filter="url(#bl2)"/></g>
<g><circle cx="161" cy="932" r="19.500" fill="#b4b4b4" fill-opacity=".25" stroke="#a4a4a4"/><path d="M146 938L169 916M153 946L177 926" stroke="#6c6c6c" stroke-width="5" opacity=".6"/><ellipse cx="154" cy="925" rx="6" ry="2.500" fill="#eee" transform="rotate(-35 154 925)" filter="url(#bl2)"/></g>
<circle cx="210" cy="932" r="19.500" fill="url(#sLight)"/><ellipse cx="200" cy="925" rx="4" ry="3" fill="#eee" filter="url(#bl2)"/>
<circle cx="259" cy="932" r="19.500" fill="url(#sDark)"/>
<circle cx="308" cy="932" r="19.500" fill="url(#sWhite)"/>
<circle cx="357" cy="932" r="19.500" fill="url(#sWhite)"/>
<circle cx="406" cy="932" r="19.500" fill="url(#sTan)"/>
<circle cx="455" cy="932" r="19.500" fill="url(#sPale)"/>
<g><circle cx="504" cy="932" r="19.500" fill="url(#env)" stroke="#6b5a40"/><path d="M490 928L497 917M497 930L503 915M505 930L509 915M512 928L513 917M518 928L514 920" stroke="#fff" stroke-width="2.200" opacity=".9"/><path d="M486 926Q504 921 522 926" stroke="#333" fill="none" stroke-width="2"/></g>
<g><circle cx="553" cy="932" r="19.500" fill="url(#env)" stroke="#5a5040"/><path d="M538 930Q543 916 552 922Q560 914 568 930Z" fill="#2c3020"/></g>
<circle cx="602" cy="932" r="19.500" fill="url(#sBlack)"/>
<circle cx="651" cy="932" r="19.500" fill="url(#sBlack2)"/>
<g>
<text x="43" y="966" class="g">Mat</text><text x="92" y="966" class="g">VETRO</text><text x="141" y="966" style="fill:#fff">Mat</text><text x="190" y="966" class="g">light</text><text x="239" y="966" class="g">dark</text><text x="288" y="966" class="g">whigt</text><text x="337" y="966" class="g">Mat</text><text x="386" y="966" class="g">Mat</text><text x="435" y="966" class="g">Mat</text><text x="484" y="966" class="g">Mat</text><text x="533" y="966" class="g">Mat</text><text x="582" y="966" class="g">Mat</text><text x="631" y="966" class="g">Mat</text>
</g>

<!-- COORDINATES -->
<rect x="896.500" y="870.500" width="299" height="126" fill="#8a8a8a" stroke="#a0a0a0"/>
<rect x="897" y="871" width="298" height="16" fill="url(#hl)"/><rect x="897" y="887" width="298" height="1" fill="#5a5a5a"/>
<rect x="902.500" y="873.500" width="9" height="12" fill="#8d8d8d" stroke="#b0b0b0"/>
<text x="921.700" y="883" class="d">Coordinates</text>
<rect x="902" y="891" width="12" height="14" fill="url(#grip)"/>
<text x="921.500" y="902">Position</text><text x="1013" y="902">Size</text><text x="1105" y="902">Rotation</text>
<rect x="897" y="908" width="298" height="1" fill="#a8a8a8"/>
<g>
<text x="901" y="926" style="letter-spacing:0;font-size:12px">X</text><text x="901" y="945" style="letter-spacing:0;font-size:12px">Y</text><text x="901" y="964" style="letter-spacing:0;font-size:12px">Z</text>
<text x="999" y="926" style="letter-spacing:0;font-size:12px">X</text><text x="999" y="945" style="letter-spacing:0;font-size:12px">Y</text><text x="999" y="964" style="letter-spacing:0;font-size:12px">Z</text>
<text x="1097" y="926" style="letter-spacing:0;font-size:12px">H</text><text x="1097" y="945" style="letter-spacing:0;font-size:12px">P</text><text x="1097" y="964" style="letter-spacing:0;font-size:12px">B</text>
</g>
<g fill="url(#dk)" stroke="#7c7c7c">
<rect x="912" y="914" width="84" height="15" rx="6"/><rect x="912" y="933" width="84" height="15" rx="6"/><rect x="912" y="952" width="84" height="15" rx="6"/>
<rect x="1010" y="914" width="84" height="15" rx="6"/><rect x="1010" y="933" width="84" height="15" rx="6"/><rect x="1010" y="952" width="84" height="15" rx="6"/>
<rect x="1109" y="914" width="82" height="15" rx="6"/><rect x="1109" y="933" width="82" height="15" rx="6"/><rect x="1109" y="952" width="82" height="15" rx="6"/>
</g>
<text x="917" y="926" class="l">12.75 cm</text><text x="917" y="945" class="l">-28.35 cm</text><text x="917" y="964" class="l">48.251 cm</text>
<text x="1015" y="926" class="l">0.327 cm</text><text x="1015" y="945" class="l">56.7 cm</text><text x="1015" y="964" class="l">34.837 cm</text>
<text x="1114" y="926" class="l">0 °</text><text x="1114" y="945" class="l">0 °</text><text x="1114" y="964" class="l">0 °</text>
<use href="#spin" x="988" y="916"/><use href="#spin" x="988" y="935"/><use href="#spin" x="988" y="954"/><use href="#spin" x="1086" y="916"/><use href="#spin" x="1086" y="935"/><use href="#spin" x="1086" y="954"/><use href="#spin" x="1183" y="916"/><use href="#spin" x="1183" y="935"/><use href="#spin" x="1183" y="954"/>
<g fill="url(#btn)" stroke="#5a5a5a"><rect x="912.500" y="973.500" width="83" height="17" rx="7"/><rect x="1010.500" y="973.500" width="83" height="17" rx="7"/><rect x="1108.500" y="973.500" width="83" height="17" rx="7"/></g>
<text x="919" y="986" class="g">Object</text><text x="1017" y="986" class="g">Size</text><text x="1150" y="987" text-anchor="middle" class="g">Apply</text>
<path d="M983 981H991L987 985ZM1081 981H1089L1085 985Z" fill="#ddd"/>

<!-- STATUS -->
<rect x="39.500" y="1000.500" width="1156" height="19" fill="#8a8a8a" stroke="#a0a0a0"/>
<rect x="45" y="1003" width="12" height="14" fill="url(#grip)"/>
<text x="64.600" y="1014">00:00:13</text>

<!-- OBJECTS PANEL -->
<rect x="1197" y="40" width="1" height="980" fill="#5c5c5c"/><rect x="1198" y="40" width="1" height="980" fill="#a4a4a4"/>
<path d="M1200 65V49a4 4 0 0 1 4 -4h37a4 4 0 0 1 4 4V65Z" fill="#a3a3a3"/>
<path d="M1247 65V51a4 4 0 0 1 4 -4h47a4 4 0 0 1 4 4V65Z" fill="#646464"/>
<text x="1204" y="60" style="fill:#f0f0f0">Objects</text>
<text x="1253" y="60" style="fill:#9a9a9a">Structure</text>
<rect x="1200" y="65" width="480" height="23" fill="#8c8c8c" stroke="#a2a2a2"/>
<rect x="1205" y="70" width="12" height="12" fill="url(#grip)"/>
<text x="1225.500" y="80">File</text><text x="1256" y="80">Edit</text><text x="1288" y="80">View</text><text x="1324" y="80">Objects</text><text x="1375" y="80">Tags</text><text x="1413" y="80">Bookmarks</text>
<g fill="none" stroke="#1c1c1c"><circle cx="1611" cy="74" r="4" stroke-width="1.600"/><path d="M1614 77L1620 83" stroke-width="2.300"/><path d="M1624 76L1632 69L1640 76M1627 75V83H1637V75" stroke-width="1.600"/><path d="M1645 77Q1651 72 1657 77Q1651 82 1645 77Z" stroke="#444"/><rect x="1664" y="71" width="11" height="12" stroke="#222"/></g>
<rect x="1664" y="69.500" width="11" height="3" fill="#222"/><path d="M1669.500 74V81M1666 77.500H1673" stroke="#111" stroke-width="1.500"/>

<rect x="1200" y="88" width="478" height="1" fill="#555"/>
<g clip-path="url(#objs)">
<g fill="#919191"><rect x="1200" y="90" width="465" height="20"/><rect x="1200" y="130" width="465" height="20"/><rect x="1200" y="170" width="465" height="20"/><rect x="1200" y="210" width="465" height="20"/><rect x="1200" y="250" width="465" height="20"/><rect x="1200" y="290" width="465" height="20"/><rect x="1200" y="330" width="465" height="20"/><rect x="1200" y="370" width="465" height="20"/><rect x="1200" y="410" width="465" height="20"/><rect x="1200" y="450" width="465" height="20"/><rect x="1200" y="490" width="465" height="20"/></g>
<path d="M1326.500 90V525M1366.500 90V525" stroke="#5a5a5a"/>
<path d="M1208.500 90V525M1219.500 261V281M1230.500 281V321M1219.500 381V421M1219.500 481V501" stroke="#6a6a6a" fill="none"/>
<path d="M1208 120.500H1216M1208 160.500H1216M1208 180.500H1216M1208 200.500H1216M1208 240.500H1216M1208 340.500H1216M1208 360.500H1216M1208 440.500H1216M1208 460.500H1216M1208 100.500H1216M1208 140.500H1216M1208 220.500H1216M1208 260.500H1216M1208 380.500H1216M1208 480.500H1216M1208 520.500H1216M1219 400.500H1228M1219 420.500H1228M1219 500.500H1228M1219 280.500H1226M1230 300.500H1240M1230 320.500H1240" stroke="#6a6a6a"/>
<g transform="translate(0,100)"><use href="#plus" x="1208.500"/><path d="M1219 -5L1226 -7L1231 -4V4L1225 7L1219 4Z" fill="#5fd4a0" stroke="#eee" stroke-width=".7"/><rect x="1222" y="-3" width="5" height="5" fill="none" stroke="#2a7a5a"/><text x="1236" y="5">Extrude NURBS</text><use href="#dots"/><use href="#ok"/><use href="#balls"/></g>
<g transform="translate(0,120)"><use href="#cub" x="1225"/><text x="1236" y="5">Cube</text><use href="#dots"/><use href="#no"/><use href="#balls"/></g>
<g transform="translate(0,140)"><use href="#plus" x="1208.500"/><use href="#nul" x="1226"/><text x="1236" y="5">grafica</text><use href="#dots"/></g>
<g transform="translate(0,160)"><use href="#cub" x="1225"/><text x="1236" y="5">Cube</text><use href="#dots"/><use href="#ok"/><use href="#balls"/></g>
<g transform="translate(0,180)"><use href="#sph" x="1225"/><text x="1236" y="5">visibile</text><use href="#dots"/><use href="#clap"/><use href="#tagGi" x="1397"/></g>
<g transform="translate(0,200)"><use href="#sph" x="1225"/><text x="1236" y="5">gi</text><use href="#dots"/><use href="#clap"/><use href="#tagGi" x="1397"/></g>
<g transform="translate(0,220)"><use href="#plus" x="1208.500"/><use href="#poly" x="1225"/><text x="1236" y="5">credit</text><use href="#dotsR"/><use href="#balls"/><use href="#chk"/></g>
<g transform="translate(0,240)"><rect x="1219" y="-7" width="7" height="7" fill="#5fd4a0" stroke="#2a7a5a"/><path d="M1226 0L1231 5" stroke="#d8d8d8" stroke-width="2"/><text x="1236" y="5">Instance</text><use href="#dots"/><use href="#ok"/><use href="#tagChrome" x="1376"/></g>
<g transform="translate(0,260)"><use href="#minus" x="1208.500"/><use href="#nul" x="1226"/><text x="1236" y="5">Null Object</text><use href="#dots"/><use href="#tagChrome" x="1376"/></g>
<g transform="translate(0,280)"><use href="#minus" x="1219.500"/><path d="M1229 -5L1236 -9L1239 -4L1233 2L1235 6L1231 8L1228 3Z" fill="#5fd4a0" stroke="#eee" stroke-width=".6"/><text x="1247" y="5">Sweep NURBS</text><use href="#dots"/><use href="#ok"/><use href="#balls"/><use href="#tagChrome" x="1396"/></g>
<g transform="translate(0,300)"><circle cx="1247" r="5.500" fill="none" stroke="#6ab8d8" stroke-width="1.300"/><circle cx="1247" r="3.500" fill="none" stroke="#7a9aaa" stroke-width=".8"/><text x="1258" y="5">Circle</text><use href="#dots"/><use href="#ok"/></g>
<g transform="translate(0,320)"><path d="M1244 -5H1252M1244 -5V5H1251" fill="none" stroke="#5ab0cc" stroke-width="1.300" stroke-dasharray="3 1"/><circle cx="1244" cy="-5" r="1.200" fill="#eee"/><circle cx="1252" cy="-6" r="1.200" fill="#eee"/><circle cx="1251" cy="5" r="1.200" fill="#eee"/><text x="1258" y="5">Spline</text><use href="#dots"/><use href="#ok"/></g>
<g transform="translate(0,340)"><use href="#nul" x="1226"/><text x="1236" y="5">Cube</text><use href="#dots"/><use href="#balls"/></g>
<g transform="translate(0,360)"><use href="#poly" x="1225"/><text x="1236" y="5">up</text><use href="#dots"/><use href="#balls"/><use href="#chk"/><use href="#tagLight" x="1416"/></g>
<g transform="translate(0,380)"><use href="#minus" x="1208.500"/><use href="#poly" x="1225"/><text x="1236" y="5" style="fill:#b4b4b4">plex</text><use href="#dots"/><use href="#balls"/><use href="#chk"/><use href="#tagGlass" x="1416"/></g>
<g transform="translate(0,400)"><use href="#poly" x="1236"/><text x="1247" y="5">plex.1</text><use href="#dots"/><use href="#balls"/><use href="#chk"/><use href="#tagGlass" x="1416"/></g>
<g transform="translate(0,420)"><use href="#poly" x="1236"/><text x="1247" y="5" style="fill:#e8e8e8">plex.2</text><use href="#dots"/><use href="#balls"/><use href="#chk"/><use href="#tagGlass" x="1416"/></g>
<g transform="translate(0,440)"><use href="#poly" x="1225"/><text x="1236" y="5">down</text><use href="#dots"/><use href="#balls"/><use href="#chk"/></g>
<g transform="translate(0,460)"><use href="#poly" x="1225"/><text x="1236" y="5">dx</text><use href="#dots"/><use href="#tri" x="1376"/><use href="#tri" x="1396"/><use href="#tri" x="1416"/><use href="#tri" x="1436"/><use href="#tri" x="1456"/><use href="#balls" x="100"/><use href="#chk" x="100"/><use href="#tagTan" x="1516"/><use href="#tagLight" x="1536"/></g>
<g transform="translate(0,480)"><use href="#minus" x="1208.500"/><use href="#poly" x="1225"/><text x="1236" y="5">sx</text><use href="#dots"/><use href="#balls"/><use href="#chk"/><use href="#tagLight" x="1416"/></g>
<g transform="translate(0,500)"><use href="#poly" x="1236"/><text x="1247" y="5">credit</text><use href="#dots"/><use href="#balls"/><use href="#chk"/></g>
<g transform="translate(0,520)"><use href="#minus" x="1208.500"/><use href="#poly" x="1225"/><text x="1236" y="5">front</text><use href="#dots"/><use href="#balls"/><use href="#chk"/><use href="#tagLight" x="1416"/></g>
</g>
<!-- scrollbar -->
<rect x="1666" y="90" width="12" height="435" fill="#6c6c6c"/>
<rect x="1667" y="91" width="10" height="362" rx="5" fill="#888"/><rect x="1667" y="102" width="10" height="350" fill="#828282"/>
<path d="M1669 101L1672 93L1675 101Z" fill="#a4a4a4"/><path d="M1669 515L1672 523L1675 515Z" fill="#b0b0b0"/>
<rect x="1200" y="525" width="478" height="1" fill="#555"/><rect x="1200" y="526" width="480" height="1" fill="#a8a8a8"/>

<!-- ATTRIBUTES -->
<rect x="1200" y="528" width="480" height="18" fill="url(#hl)"/>
<rect x="1203.500" y="531.500" width="9" height="11" fill="#8f8f8f" stroke="#b0b0b0"/>
<text x="1224" y="542" class="d">Attributes</text>
<rect x="1200" y="546" width="480" height="22" fill="#8a8a8a" stroke="#a2a2a2"/>
<rect x="1205" y="550" width="12" height="13" fill="url(#grip)"/>
<text x="1225.500" y="561">Mode</text><text x="1266.500" y="561">Edit</text><text x="1299" y="561">User Data</text>
<path d="M1558 556L1572 550V562Z" fill="#1e1e1e"/><path d="M1588 556L1574 550V562Z" fill="#979797"/>
<path d="M1600 562L1608 550L1616 562Z" fill="#979797"/>
<g fill="none" stroke="#2a2a2a"><rect x="1627.500" y="555.500" width="10" height="8" fill="#4a4a4a"/><path d="M1629 555V552a3.500 3.500 0 0 1 7 0" stroke-width="1.400"/><circle cx="1651" cy="552" r="2.800"/><path d="M1647 563Q1647 557 1651 557Q1655 557 1655 563Z"/><rect x="1664" y="552" width="11" height="12"/></g>
<rect x="1664" y="550.500" width="11" height="3" fill="#222"/><path d="M1669.500 555V562M1666 558.500H1673" stroke="#111" stroke-width="1.500"/>

<rect x="1202" y="569" width="22" height="23" fill="url(#stM)"/><circle cx="1213" cy="580" r="10" fill="#bbb" fill-opacity=".3" stroke="#aaa" stroke-width=".6"/><path d="M1207 578L1214 572" stroke="#eee" stroke-width="1.500"/>
<text x="1228" y="585">Material [Mat]</text>

<!-- tabs -->
<path d="M1202.500 600a6 6 0 0 1 6 -5.500H1635a6 6 0 0 1 6 5.500v6a6 6 0 0 1 -6 5.500H1348.500V623a5 5 0 0 1 -5 5.500H1208a6 6 0 0 1 -5.500 -5.500Z" fill="#8a8a8a" stroke="#666"/>
<rect x="1276" y="595" width="72" height="16.500" fill="#d2d2d2"/>
<path d="M1202.500 611.500H1348.500M1275.500 595V628M1348.500 595V611M1422.500 595V611M1494.500 595V611M1567.500 595V611" stroke="#666"/>
<g text-anchor="middle">
<text x="1238" y="607" class="g">Basic</text><text x="1311" y="607" style="fill:#111">Color</text><text x="1384.500" y="607" class="g">Transparency</text><text x="1457" y="607" class="g">Reflection</text><text x="1530" y="607" class="g">Specular</text><text x="1602" y="607" class="g">Illumination</text>
<text x="1238" y="624" class="g">Editor</text><text x="1311" y="624" class="g">Assign</text>
</g>

<!-- preview -->
<path d="M1205 636H1213L1209 640Z" fill="#111"/>
<rect x="1216.500" y="632.500" width="91" height="90" fill="url(#stP)" stroke="#aeaeae"/>
<circle cx="1262" cy="677" r="37.500" fill="#a8a8a8" stroke="#9c9c9c" stroke-width="1"/>
<g clip-path="url(#pc)"><rect x="1220" y="635" width="84" height="84" fill="url(#stG)"/><ellipse cx="1244" cy="663" rx="10" ry="4" fill="#fff" transform="rotate(-30 1244 663)" filter="url(#bl2)"/><circle cx="1262" cy="677" r="35" fill="none" stroke="#d0d0d0" stroke-width="4" opacity=".25"/></g>

<!-- color section -->
<rect x="1202" y="727" width="478" height="15" fill="#5f5f5f"/>
<text x="1204" y="739" class="b" style="fill:#dedede;font-size:12px">Color</text>
<circle cx="1207.500" cy="755" r="2" fill="none" stroke="#111"/>
<text x="1212.500" y="759">Color . . . .</text>
<path d="M1266 751H1274L1270 755Z" fill="#111"/>
<rect x="1277.500" y="747" width="23" height="36" fill="#cfcfcf" stroke="#b4b4b4"/>
<text x="1304" y="760" style="font-size:12px;letter-spacing:0">R</text><text x="1304" y="778" style="font-size:12px;letter-spacing:0">G</text><text x="1304" y="797" style="font-size:12px;letter-spacing:0">B</text>
<g fill="url(#dk)" stroke="#7c7c7c"><rect x="1318" y="747" width="60" height="15" rx="6"/><rect x="1318" y="766" width="60" height="15" rx="6"/><rect x="1318" y="785" width="60" height="15" rx="6"/></g>
<text x="1323" y="759" class="l" style="font-size:12px">204</text><text x="1323" y="778" class="l" style="font-size:12px">204</text><text x="1323" y="797" class="l" style="font-size:12px">204</text>
<use href="#spin" x="1370" y="749"/><use href="#spin" x="1370" y="768"/><use href="#spin" x="1370" y="787"/>
<rect x="1383" y="752" width="288" height="5" fill="url(#sr)"/><rect x="1383" y="771" width="288" height="5" fill="url(#sg)"/><rect x="1383" y="790" width="288" height="5" fill="url(#sb)"/>
<use href="#tick" x="1608" y="757"/><use href="#tick" x="1608" y="776"/><use href="#tick" x="1608" y="795"/>
<rect x="1277.500" y="785" width="23" height="16" rx="5" fill="url(#btn)" stroke="#5e5e5e"/><path d="M1287 790L1291 793L1287 796Z" fill="#ccc"/>
<circle cx="1207.500" cy="813" r="2" fill="none" stroke="#111"/>
<text x="1213" y="817">Brightness</text>
<rect x="1277.500" y="805" width="396" height="15" rx="6" fill="#858585" stroke="#6e6e6e"/>
<path d="M1283 805H1342.500V820H1283a6 6 0 0 1 -5.500 -6V811a6 6 0 0 1 5.500 -6Z" fill="url(#dk)"/>
<text x="1282" y="816" class="l" style="font-size:12px">100 %</text><use href="#spin" x="1335" y="807"/>
<rect x="1509" y="815" width="1" height="4" fill="#d89a30"/><rect x="1672" y="806" width="1.500" height="13" fill="#d89a30"/>

<text x="1213" y="844">Texture . . . .</text>
<rect x="1277" y="829.500" width="18" height="17" rx="6" fill="url(#btn)" stroke="#5e5e5e"/><path d="M1285 835L1289 838L1285 841Z" fill="#ccc"/>
<rect x="1297.500" y="829.500" width="342" height="17" rx="6" fill="url(#btn)" stroke="#5e5e5e"/>
<rect x="1642.500" y="829.500" width="31" height="17" rx="6" fill="url(#btn)" stroke="#5e5e5e"/><text x="1658" y="844" text-anchor="middle" class="g">...</text>

<text x="1213" y="865" class="d">Mix Mode . .</text>
<rect x="1278.500" y="852.500" width="395" height="16" rx="5" fill="#848484" stroke="#767676"/>
<text x="1284" y="864.500" class="d">Normal</text><path d="M1661 858H1669L1665 862Z" fill="#6e6e6e"/>
<text x="1213" y="884" class="d">Mix Strength</text>
<rect x="1278.500" y="871.500" width="395" height="16" rx="5" fill="#858585" stroke="#7a7a7a"/>
<path d="M1284 871.500H1342V887.500H1284a5 5 0 0 1 -5.500 -5V876a5 5 0 0 1 5.500 -4.500Z" fill="#6a6a6a"/>
<text x="1283" y="883" style="fill:#5a5a5a;font-size:12px">100 %</text><path d="M1335 876L1338 873L1341 876ZM1335 883L1338 886L1341 883Z" fill="#8e8e8e"/>

<!-- TASKBAR -->
<rect y="1019" width="1680" height="1" fill="#5a5a5a"/>
<rect y="1020" width="1680" height="30" fill="url(#tb)"/>
<circle cx="30" cy="1034" r="20" fill="#0a1a2a" stroke="#6f8090"/>
<circle cx="30" cy="1034" r="18" fill="url(#orb)"/>
<path d="M20 1027Q25 1024 29 1026L28 1033Q24 1031 19 1033Z" fill="#e2622c"/><path d="M31 1026Q35 1028 40 1026L39 1033Q34 1035 30 1033Z" fill="#7cb83a"/><path d="M19 1035Q24 1033 28 1035L27 1042Q23 1040 18 1042Z" fill="#3f9ee0"/><path d="M30 1035Q34 1037 39 1035L38 1042Q33 1044 29 1042Z" fill="#f1c331"/>
<path d="M15 1030A16 12 0 0 1 45 1030Q30 1024 15 1030Z" fill="#fff" opacity=".25"/>
<g transform="translate(65,1027)"><rect width="16" height="13" fill="#1d5ab0" stroke="#bcd"/><rect x="2" y="9" width="12" height="2" fill="#b8d4ee"/></g>
<g transform="translate(88,1027)"><rect width="16" height="13" fill="#1c3f88" stroke="#bcd"/><rect x="2" y="2" width="8" height="5" fill="#e0e8f0"/><rect x="6" y="6" width="8" height="5" fill="#c0cee0"/></g>
<g transform="translate(119,1034)"><circle r="7" fill="#2a8ee0" stroke="#fff" stroke-width=".5"/><text x="0" y="5" text-anchor="middle" class="b" style="font-size:15px;fill:#a8dcff;font-style:italic;letter-spacing:0">e</text><ellipse rx="10" ry="3" fill="none" stroke="#f0b028" stroke-width="1.500" transform="rotate(-40)"/></g>
<g transform="translate(134,1027)"><rect width="15" height="15" fill="#f3c46a" stroke="#e08a18" stroke-width="1.500"/><circle cx="7.500" cy="7.500" r="5" fill="#f8e4ae" stroke="#a86a10"/><path d="M7.500 4V7.500H10.500" stroke="#a86a10" fill="none"/></g>
<g transform="translate(158,1027)"><rect width="14" height="15" fill="#d4dae0" stroke="#8a9098"/><rect x="2" y="2" width="10" height="3" fill="#7e868e"/><path d="M2 7h10M2 9.500h10M2 12h10" stroke="#6a7078" stroke-dasharray="2 1"/></g>
<g transform="translate(181,1027)"><rect width="15" height="15" rx="3" fill="#14149c"/><circle cx="5" cy="5" r="3" fill="#e84c8c"/><circle cx="10" cy="5" r="3" fill="#f09020"/><circle cx="7" cy="10" r="3" fill="#e8d040"/><circle cx="11" cy="10" r="2" fill="#40c060"/></g>
<g transform="translate(204,1027)"><rect width="15" height="15" fill="#fff" stroke="#38a0f0" stroke-width="1.500"/><circle cx="7.500" cy="7.500" r="6" fill="#f08a10"/><path d="M5.500 4.500L11 7.500L5.500 10.500Z" fill="#fff"/></g>
<g transform="translate(234,1034)"><circle r="8" fill="#d8382c"/><path d="M0 0L8 0A8 8 0 0 1 -4 7Z" fill="#f8c818"/><path d="M0 0L-4 7A8 8 0 0 1 -4 -7Z" fill="#30a040"/><circle r="3.600" fill="#3a78e0" stroke="#fff" stroke-width="1.200"/></g>
<g fill="url(#tbtn)" stroke="#3c3c3c">
<rect x="264.500" y="1022.500" width="155" height="26" rx="2"/><rect x="424.500" y="1022.500" width="155" height="26" rx="2" fill="#1c1c1c"/><rect x="583.500" y="1022.500" width="155" height="26" rx="2"/><rect x="744.500" y="1022.500" width="155" height="26" rx="2"/><rect x="904.500" y="1022.500" width="155" height="26" rx="2"/><rect x="1064.500" y="1022.500" width="155" height="26" rx="2"/><rect x="1224.500" y="1022.500" width="155" height="26" rx="2"/>
</g>
<g transform="translate(272,1027)"><rect width="15" height="15" fill="#f3c46a" stroke="#e08a18" stroke-width="1.500"/><circle cx="7.500" cy="7.500" r="5" fill="#f8e4ae" stroke="#a86a10"/><path d="M7.500 4V7.500H10.500" stroke="#a86a10" fill="none"/></g>
<text x="292" y="1039.500" class="w">Posta in arrivo - Mic...</text>
<circle cx="440" cy="1035" r="6.500" fill="url(#c4d)" stroke="#bcc8e0"/>
<text x="453" y="1039.500" class="w">CINEMA 4D (64 Bit) ...</text>
<g transform="translate(592,1027)"><rect width="15" height="15" fill="#1e4a4a" stroke="#d8e8e0"/><path d="M3 12L7 3L11 12M12 8h3v5h-3z" stroke="#e0f0e0" fill="none"/></g>
<text x="612" y="1039.500" class="w">AutoCAD 2007 - [C:...</text>
<g transform="translate(753,1027)"><rect width="14" height="15" fill="#d4dae0" stroke="#8a9098"/><rect x="2" y="2" width="10" height="3" fill="#7e868e"/><path d="M2 7h10M2 9.500h10M2 12h10" stroke="#6a7078" stroke-dasharray="2 1"/></g>
<text x="772" y="1039.500" class="w">Calcolatrice</text>
<g transform="translate(913,1026)"><path d="M0 2H5L14 0V14L5 17H0Z" fill="#e8c060"/><path d="M7 10V4L11 0L15 5H12V10Z" fill="#2fb04a"/></g>
<text x="932" y="1039.500" class="w">casa natuzzi</text>
<g transform="translate(1080,1035)"><circle r="6" fill="#2a8ee0"/><text x="0" y="4.500" text-anchor="middle" class="b" style="font-size:13px;fill:#c8ecff;font-style:italic;letter-spacing:0">e</text><ellipse rx="9" ry="3" fill="none" stroke="#f0b028" stroke-width="1.400" transform="rotate(-40)"/></g>
<text x="1092" y="1039.500" class="w">Leggi argomento - ...</text>
<g transform="translate(1233,1027)"><rect y="1" width="12" height="14" rx="2" fill="#f4f4f4"/><path d="M4 13L13 0L15 2L7 14Z" fill="#e8902c"/><path d="M10 4L13 0L15 2L12 6Z" fill="#40a050"/></g>
<text x="1252" y="1039.500" class="w">Adobe Photoshop</text>
<path d="M1528 1030L1523 1034.500L1528 1039" fill="none" stroke="#ddd" stroke-width="2"/>
<rect x="1535" y="1028" width="16" height="12" fill="#e8120c"/><text x="1543" y="1038" text-anchor="middle" class="b" style="font-size:9px;fill:#fff;letter-spacing:-.3px">ATI</text>
<rect x="1553" y="1026" width="15" height="15" fill="#f3c46a" stroke="#e08a18" stroke-width="1.500"/><circle cx="1560.500" cy="1033.500" r="5" fill="#f8e4ae" stroke="#a86a10"/><path d="M1560.500 1030V1033.500H1563.500" stroke="#a86a10" fill="none"/>
<rect x="1572" y="1027" width="14" height="14" rx="2" fill="#c8c8d0"/><rect x="1574" y="1028" width="9" height="10" fill="#a01830"/><circle cx="1582.500" cy="1037.500" r="4.500" fill="#d01818"/><path d="M1580.500 1035.500L1584.500 1039.500M1584.500 1035.500L1580.500 1039.500" stroke="#fff"/>
<rect x="1604" y="1027" width="9" height="8" fill="#1a6ab8" stroke="#e0e8f0"/><rect x="1600" y="1032" width="9" height="8" fill="#1a6ab8" stroke="#e0e8f0"/>
<path d="M1618 1031.500H1621L1625 1027.500V1039.500L1621 1035.500H1618Z" fill="#d8e0e8"/><path d="M1627 1031a4 4 0 0 1 0 5M1630 1029a7 7 0 0 1 0 9" stroke="#7ce0a0" fill="none"/>
<text x="1639" y="1039.500" class="w" style="font-size:12.500px;letter-spacing:.2px">10.19</text>
</svg>
</body></html>
